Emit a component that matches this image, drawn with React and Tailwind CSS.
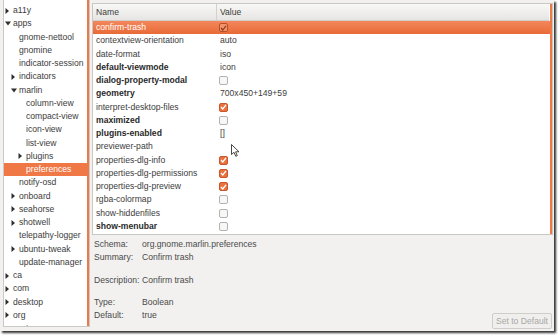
const tree = [
  { lvl: 0, exp: "r", label: "a11y" },
  { lvl: 0, exp: "d", label: "apps" },
  { lvl: 1, label: "gnome-nettool" },
  { lvl: 1, label: "gnomine" },
  { lvl: 1, label: "indicator-session" },
  { lvl: 1, exp: "r", label: "indicators" },
  { lvl: 1, exp: "d", label: "marlin" },
  { lvl: 2, label: "column-view" },
  { lvl: 2, label: "compact-view" },
  { lvl: 2, label: "icon-view" },
  { lvl: 2, label: "list-view" },
  { lvl: 2, exp: "r", label: "plugins" },
  { lvl: 2, label: "preferences", sel: true },
  { lvl: 1, label: "notify-osd" },
  { lvl: 1, exp: "r", label: "onboard" },
  { lvl: 1, exp: "r", label: "seahorse" },
  { lvl: 1, exp: "r", label: "shotwell" },
  { lvl: 1, label: "telepathy-logger" },
  { lvl: 1, exp: "r", label: "ubuntu-tweak" },
  { lvl: 1, label: "update-manager" },
  { lvl: 0, exp: "r", label: "ca" },
  { lvl: 0, exp: "r", label: "com" },
  { lvl: 0, exp: "r", label: "desktop" },
  { lvl: 0, exp: "r", label: "org" },
  { lvl: 0, exp: "r", label: "system" },
];

const indent = ["pl-[1px]", "pl-[7px]", "pl-[14px]"];

const keys = [
  { name: "confirm-trash", val: "check", sel: true },
  { name: "contextview-orientation", val: "auto" },
  { name: "date-format", val: "iso" },
  { name: "default-viewmode", val: "icon", bold: true },
  { name: "dialog-property-modal", val: "box", bold: true },
  { name: "geometry", val: "700x450+149+59", bold: true },
  { name: "interpret-desktop-files", val: "check" },
  { name: "maximized", val: "box", bold: true },
  { name: "plugins-enabled", val: "[]", bold: true },
  { name: "previewer-path", val: "" },
  { name: "properties-dlg-info", val: "check" },
  { name: "properties-dlg-permissions", val: "check" },
  { name: "properties-dlg-preview", val: "check" },
  { name: "rgba-colormap", val: "box" },
  { name: "show-hiddenfiles", val: "box" },
  { name: "show-menubar", val: "box", bold: true },
];

const details = [
  { k: "Schema:", v: "org.gnome.marlin.preferences" },
  { k: "Summary:", v: "Confirm trash" },
  { k: "Description:", v: "Confirm trash", gap: "mt-[10px]" },
  { k: "Type:", v: "Boolean", gap: "mt-[9px]" },
  { k: "Default:", v: "true" },
];

const Arrow = ({ dir }) =>
  dir === "d" ? (
    <svg width="6" height="5" viewBox="0 0 6 5">
      <path d="M0 0.5 L6 0.5 L3 4.5 Z" fill="#2e2e2e" />
    </svg>
  ) : (
    <svg width="4" height="6" viewBox="0 0 4 6">
      <path d="M0.5 0 L4 3 L0.5 6 Z" fill="#2e2e2e" />
    </svg>
  );

const CheckBox = ({ on, sel }) => {
  if (sel)
    return (
      <div className="w-[9px] h-[9px] rounded-[2px] border border-[#b65127] bg-[#f2936b] flex items-center justify-center">
        <svg width="7" height="6" viewBox="0 0 7 6">
          <path d="M1 3 L2.8 5 L6 0.8" fill="none" stroke="#8c3a18" strokeWidth="1.2" />
        </svg>
      </div>
    );
  if (on)
    return (
      <div className="w-[9px] h-[9px] rounded-[2px] border border-[#c9572a] bg-[#e9713f] flex items-center justify-center">
        <svg width="7" height="6" viewBox="0 0 7 6">
          <path d="M1 3 L2.8 5 L6 0.8" fill="none" stroke="#fff" strokeWidth="1.3" />
        </svg>
      </div>
    );
  return <div className="w-[9px] h-[9px] rounded-[2px] border border-[#b4b2ae] bg-[#f7f7f6]" />;
};

const Cursor = () => (
  <svg className="absolute left-[231px] top-[144px]" width="9" height="13" viewBox="0 0 9 13">
    <path d="M0.5 0.5 L0.5 10.5 L3 8.3 L4.8 12.3 L6.3 11.6 L4.6 7.8 L8 7.8 Z" fill="#fff" stroke="#333" strokeWidth="0.9" strokeLinejoin="round" />
  </svg>
);

export default function App() {
  return (
    <div className="w-[560px] h-[336px] bg-white relative overflow-hidden text-[8.6px] text-[#3c3c3c] font-['Liberation_Sans',Arial,sans-serif]">
      <div className="w-[554px] h-[331px] bg-[#f2f1f0] flex gap-[2px] pl-[3px] shadow-[2px_2px_2px_rgba(0,0,0,0.8)]">
        {/* tree */}
        <div className="w-[87px] h-[327px] bg-white border border-t-0 border-[#cbc9c6] relative overflow-hidden pt-[4px]">
          {tree.map((t) => (
            <div
              key={t.label}
              className={`h-[13.25px] flex items-center ${indent[t.lvl]} ${t.sel ? "bg-[#f07746] text-white" : ""}`}
            >
              <div className="w-[8px] flex items-center">{t.exp && <Arrow dir={t.exp} />}</div>
              <span>{t.label}</span>
            </div>
          ))}
          <div className="absolute right-0 top-0 bottom-0 w-[2px] bg-[#f07746]" />
        </div>

        {/* right side */}
        <div className="w-[461px] flex flex-col">
          <div className="mt-[3px] h-[232px] border border-[#c9c7c4] bg-white relative overflow-hidden">
            <div className="h-[17px] flex bg-gradient-to-b from-[#f8f8f7] to-[#e6e5e3] border-b border-[#d0cecb] mr-[3px]">
              <div className="w-[124px] pl-[3px] flex items-center border-r border-[#d3d1ce]">Name</div>
              <div className="pl-[3px] flex items-center">Value</div>
            </div>
            {keys.map((k) => (
              <div
                key={k.name}
                className={`h-[13.25px] flex items-center ${k.sel ? "bg-gradient-to-b from-[#f3875c] to-[#e86a36] text-white" : ""}`}
              >
                <div className={`w-[124px] pl-[3px] ${k.bold ? "font-bold text-[#2a2a2a]" : ""}`}>{k.name}</div>
                <div className="pl-[2px]">
                  {k.val === "check" ? (
                    <CheckBox on sel={k.sel} />
                  ) : k.val === "box" ? (
                    <CheckBox />
                  ) : (
                    <span className="pl-px">{k.val}</span>
                  )}
                </div>
              </div>
            ))}
            <div className="absolute right-0 top-0 bottom-0 w-[2px] bg-[#f07746]" />
          </div>

          <div className="flex-1 flex justify-between pt-[3px] pl-[2px] pr-[1px] text-[#4a4a4a]">
            <div className="flex flex-col">
              {details.map((d) => (
                <div key={d.k} className={`h-[13px] flex items-center ${d.gap || ""}`}>
                  <span className="w-[48px]">{d.k}</span>
                  <span>{d.v}</span>
                </div>
              ))}
            </div>
            <div className="self-end mb-[2px] h-[16px] px-[3px] flex items-center rounded-[2px] border border-[#cfcdca] bg-[#f0efee] text-[#a9a7a4]">
              Set to Default
            </div>
          </div>
        </div>
      </div>
      <Cursor />
    </div>
  );
}
